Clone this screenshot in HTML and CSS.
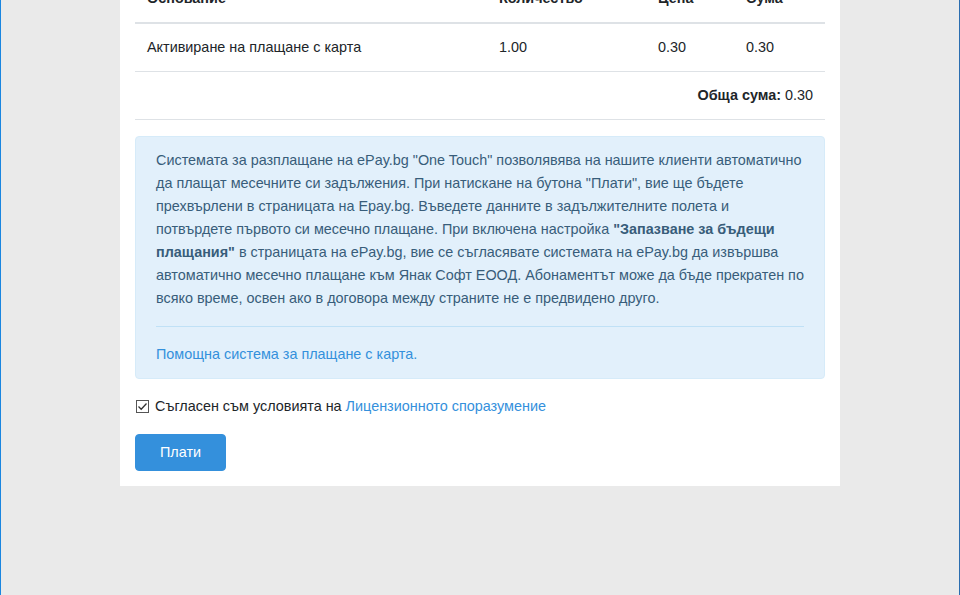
FILE: index.html
```html
<!DOCTYPE html>
<html lang="bg">
<head>
<meta charset="utf-8">
<title>Плащане</title>
<link rel="stylesheet" href="styles.css">
</head>
<body>
<main class="page">
  <section class="card">
    <table class="table">
      <colgroup>
        <col class="c1"><col class="c2"><col class="c3"><col class="c4">
      </colgroup>
      <thead>
        <tr><th>Основание</th><th>Количество</th><th>Цена</th><th>Сума</th></tr>
      </thead>
      <tbody>
        <tr><td>Активиране на плащане с карта</td><td>1.00</td><td>0.30</td><td>0.30</td></tr>
        <tr><td colspan="4" class="total"><strong>Обща сума:</strong> 0.30</td></tr>
      </tbody>
    </table>

    <div class="alert">
      <p>Системата за разплащане на ePay.bg "One Touch" позволявява на нашите клиенти автоматично да плащат месечните си задължения. При натискане на бутона "Плати", вие ще бъдете прехвърлени в страницата на Epay.bg. Въведете данните в задължителните полета и потвърдете първото си месечно плащане. При включена настройка <strong>"Запазване за бъдещи плащания"</strong> в страницата на ePay.bg, вие се съгласявате системата на ePay.bg да извършва автоматично месечно плащане към Янак Софт ЕООД. Абонаментът може да бъде прекратен по всяко време, освен ако в договора между страните не е предвидено друго.</p>
      <hr class="alert-hr">
      <a href="#" class="link">Помощна система за плащане с карта.</a>
    </div>

    <label class="check">
      <span class="box"><svg width="11" height="11" viewBox="0 0 11 11"><path d="M1.5 5.5 L4.2 8.2 L9.5 2.5" fill="none" stroke="#333" stroke-width="1.3"/></svg></span>
      <span>Съгласен съм условията на <a href="#" class="link">Лицензионното споразумение</a></span>
    </label>

    <button class="btn">Плати</button>
  </section>
</main>
</body>
</html>
```
FILE: styles.css
```css
html, body {
  margin: 0;
  padding: 0;
}
body {
  background: #eaeaea;
  border-left: 1px solid #1a86e0;
  border-right: 1px solid #2a6db0;
  height: 595px;
  box-sizing: border-box;
  overflow: hidden;
  font-family: "Liberation Sans", Arial, sans-serif;
  font-size: 14.4px;
  line-height: 1.6;
  color: #212529;
}
.page {
  width: 720px;
  margin: -25px auto 0;
}
.card {
  background: #fff;
  padding: 0 15px 15px;
  display: flex;
  flex-direction: column;
  align-items: flex-start;
}
.table {
  width: 690px;
  border-collapse: collapse;
  margin-bottom: 16px;
}
.c1 { width: 352px; }
.c2 { width: 159px; }
.c3 { width: 88px; }
.c4 { width: 91px; }
.table th, .table td {
  padding: 12px;
  text-align: left;
  vertical-align: top;
  border-top: 1px solid #dee2e6;
}
.table th {
  font-weight: bold;
  border-top: 0;
  border-bottom: 2px solid #dee2e6;
}
.table tbody tr:last-child td {
  border-bottom: 1px solid #dee2e6;
}
.table td.total {
  text-align: right;
}
.alert {
  width: 690px;
  box-sizing: border-box;
  background: #e2f0fb;
  border: 1px solid #d6ebf9;
  border-radius: 4px;
  color: #385d7a;
  padding: 12px 20px 11px;
  margin-bottom: 16px;
}
.alert p {
  margin: 0;
}
.alert-hr {
  border: 0;
  border-top: 1px solid #c0e1f6;
  margin: 16px 0;
}
.link {
  color: #3490dc;
  text-decoration: none;
}
.check {
  display: flex;
  align-items: center;
  gap: 6px;
  margin-left: 1px;
  margin-bottom: 16px;
}
.box {
  width: 11px;
  height: 11px;
  border: 1px solid #555;
  display: inline-flex;
  background: #fff;
}
.btn {
  font-family: inherit;
  font-size: 14.4px;
  line-height: 1.6;
  color: #fff;
  background: #3490dc;
  border: 1px solid #3490dc;
  border-radius: 4px;
  padding: 6px 24px;
  width: 91px;
}
```
